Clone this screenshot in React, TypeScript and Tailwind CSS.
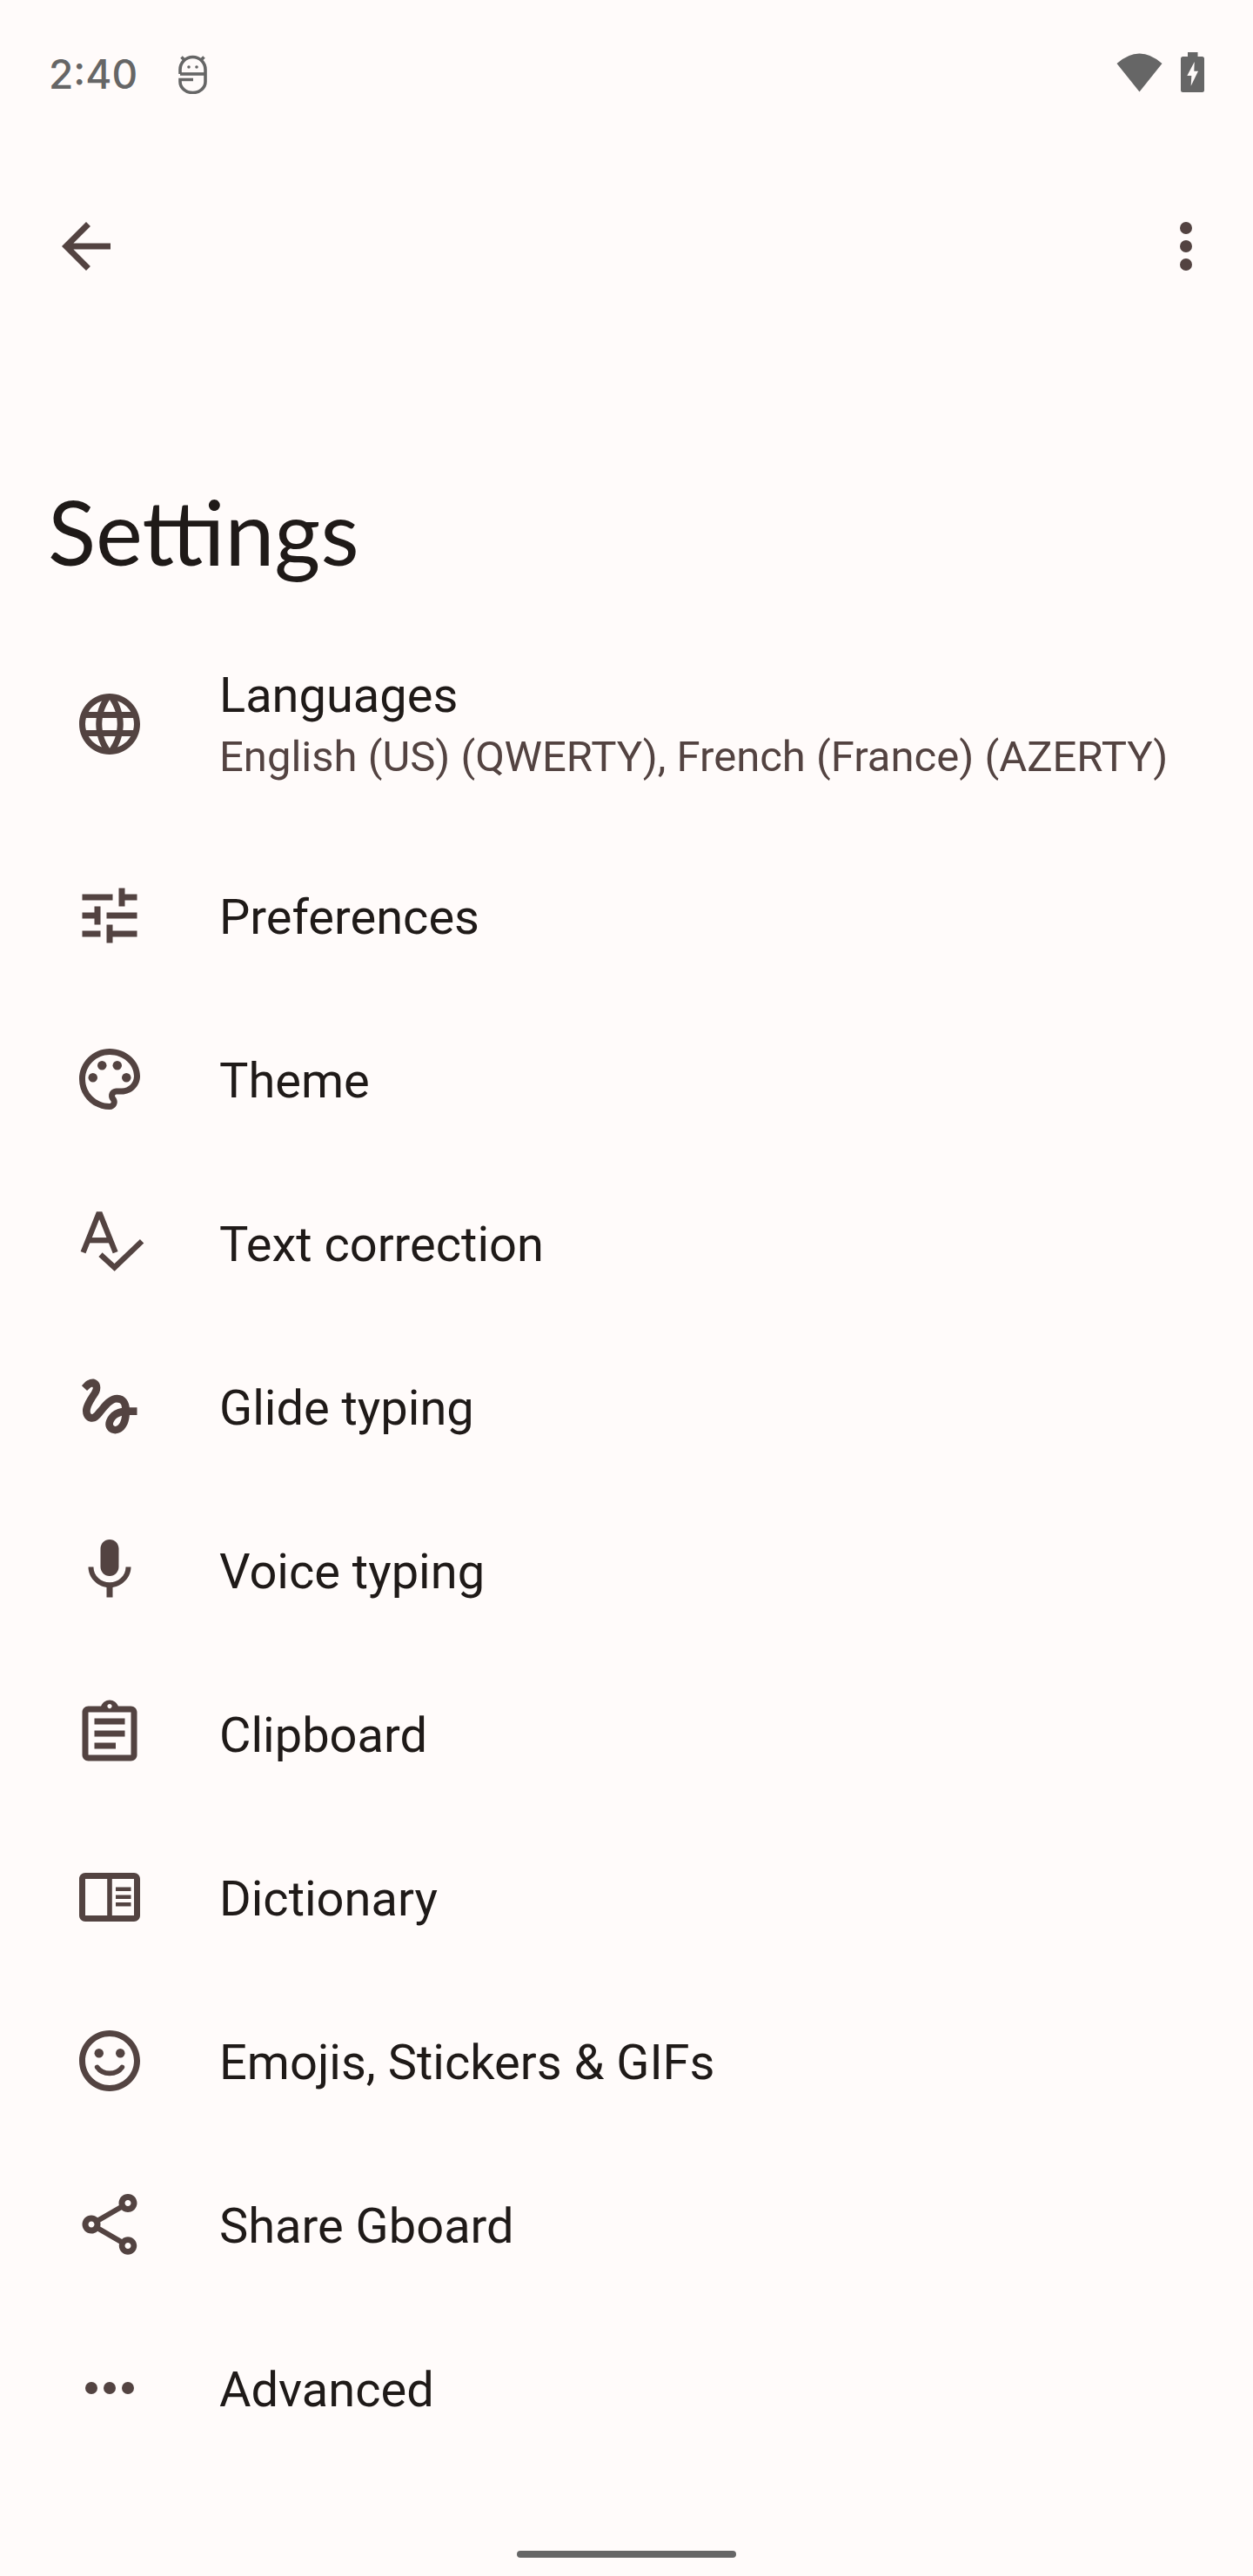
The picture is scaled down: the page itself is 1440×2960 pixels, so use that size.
import React from "react";

const ICON = "#534341";

function Ico({ children, className = "" }: { children: React.ReactNode; className?: string }) {
  return (
    <svg viewBox="0 0 24 24" width="84" height="84" fill={ICON} className={`shrink-0 ${className}`}>
      {children}
    </svg>
  );
}

const icons: Record<string, React.ReactNode> = {
  language: (
    <path d="M11.99 2C6.47 2 2 6.48 2 12s4.47 10 9.99 10C17.52 22 22 17.52 22 12S17.52 2 11.99 2zm6.93 6h-2.95c-.32-1.25-.78-2.45-1.38-3.56 1.84.63 3.37 1.91 4.33 3.56zM12 4.04c.83 1.2 1.48 2.53 1.91 3.96h-3.82c.43-1.43 1.08-2.76 1.91-3.96zM4.26 14C4.1 13.36 4 12.69 4 12s.1-1.36.26-2h3.38c-.08.66-.14 1.32-.14 2 0 .68.06 1.34.14 2H4.26zm.82 2h2.95c.32 1.25.78 2.45 1.38 3.56-1.84-.63-3.37-1.9-4.33-3.56zm2.95-8H5.08c.96-1.66 2.49-2.93 4.33-3.56C8.81 5.55 8.35 6.75 8.03 8zM12 19.96c-.83-1.2-1.48-2.53-1.91-3.96h3.82c-.43 1.43-1.08 2.76-1.91 3.96zM14.34 14H9.66c-.09-.66-.16-1.32-.16-2 0-.68.07-1.35.16-2h4.68c.09.65.16 1.32.16 2 0 .68-.07 1.34-.16 2zm.25 5.56c.6-1.11 1.06-2.31 1.38-3.56h2.95c-.96 1.65-2.49 2.93-4.33 3.56zM16.36 14c.08-.66.14-1.32.14-2 0-.68-.06-1.34-.14-2h3.38c.16.64.26 1.31.26 2s-.1 1.36-.26 2h-3.38z" />
  ),
  tune: (
    <path d="M3 17v2h6v-2H3zM3 5v2h10V5H3zm10 16v-2h8v-2h-8v-2h-2v6h2zM7 9v2H3v2h4v2h2V9H7zm14 4v-2H11v2h10zm-6-4h2V7h4V5h-4V3h-2v6z" />
  ),
  palette: (
    <>
      <path d="M12 22C6.49 22 2 17.51 2 12S6.49 2 12 2s10 4.04 10 9c0 3.31-2.69 6-6 6h-1.77c-.28 0-.5.22-.5.5 0 .12.05.23.13.33.41.47.64 1.06.64 1.67 0 1.38-1.12 2.5-2.5 2.5zm0-18c-4.41 0-8 3.59-8 8s3.59 8 8 8c.28 0 .5-.22.5-.5 0-.16-.08-.28-.14-.35-.41-.46-.63-1.05-.63-1.65 0-1.38 1.12-2.5 2.5-2.5H16c2.21 0 4-1.79 4-4 0-3.86-3.59-7-8-7z" />
      <circle cx="6.5" cy="11.5" r="1.5" />
      <circle cx="9.5" cy="7.5" r="1.5" />
      <circle cx="14.5" cy="7.5" r="1.5" />
      <circle cx="17.5" cy="11.5" r="1.5" />
    </>
  ),
  spell: (
    <g fill="none" stroke={ICON} strokeWidth="1.8">
      <path d="M3.3 15.2 8.3 2.700h.6l5 12.500" />
      <path d="M5 11.200h7.200" />
      <path d="M9 15.900l4.600 4.200 9-8.600" />
    </g>
  ),
  gesture: (
    <path d="M4.59 6.89c.7-.71 1.4-1.35 1.71-1.22.5.2 0 1.03-.3 1.52-.25.42-2.86 3.89-2.86 6.31 0 1.28.48 2.34 1.34 2.98.75.56 1.74.73 2.64.46 1.07-.31 1.95-1.4 3.06-2.77 1.21-1.49 2.83-3.44 4.08-3.44 1.63 0 1.65 1.01 1.76 1.79-3.78.64-5.38 3.67-5.38 5.37 0 1.7 1.44 3.09 3.21 3.09 1.63 0 4.29-1.33 4.69-6.1H21v-2.5h-2.47c-.15-1.65-1.09-4.2-4.03-4.2-2.25 0-4.18 1.91-4.94 2.84-.58.73-2.06 2.48-2.29 2.72-.25.3-.68.84-1.11.84-.45 0-.72-.83-.36-1.92.35-1.09 1.4-2.86 1.85-3.52.78-1.14 1.3-1.92 1.3-3.28C8.95 3.69 7.31 3 6.44 3 5.12 3 3.97 4 3.72 4.25c-.36.36-.66.66-.88.93l1.75 1.71zm9.29 11.66c-.31 0-.74-.26-.74-.72 0-.6.73-2.2 2.87-2.76-.3 2.69-1.43 3.48-2.13 3.48z" />
  ),
  mic: (
    <path d="M12 14c1.66 0 2.99-1.34 2.99-3L15 5c0-1.66-1.34-3-3-3S9 3.34 9 5v6c0 1.66 1.34 3 3 3zm5.3-3c0 3-2.54 5.1-5.3 5.1S6.7 14 6.7 11H5c0 3.41 2.72 6.23 6 6.72V21h2v-3.28c3.28-.48 6-3.3 6-6.72h-1.7z" />
  ),
  clipboard: (
    <>
      <path
        fillRule="evenodd"
        d="M19 3h-4.18C14.4 1.84 13.3 1 12 1s-2.4.84-2.82 2H5c-1.1 0-2 .9-2 2v14c0 1.1.9 2 2 2h14c1.1 0 2-.9 2-2V5c0-1.1-.9-2-2-2zm0 16H5V5h14v14zM12 2.25c.41 0 .75.34.75.75s-.34.75-.75.75-.75-.34-.75-.75.34-.75.75-.75z"
      />
      <path d="M7 7h10v2H7zM7 11h10v2H7zM7 15h7v2H7z" />
    </>
  ),
  dictionary: (
    <path
      fillRule="evenodd"
      d="M20 4H4c-1.1 0-2 .9-2 2v12c0 1.1.9 2 2 2h16c1.1 0 2-.9 2-2V6c0-1.1-.9-2-2-2zM4 18V6h7.2v12H4zm16 0h-7.2V6H20v12zM14 8.7h5V10h-5zm0 2.6h5v1.3h-5zm0 2.4h5V15h-5z"
    />
  ),
  mood: (
    <>
      <path d="M11.99 2C6.47 2 2 6.48 2 12s4.47 10 9.99 10C17.52 22 22 17.52 22 12S17.52 2 11.99 2zM12 20c-4.42 0-8-3.58-8-8s3.58-8 8-8 8 3.58 8 8-3.58 8-8 8z" />
      <circle cx="15.5" cy="9.5" r="1.5" />
      <circle cx="8.5" cy="9.5" r="1.5" />
      <path d="M7.9 14.1c.9 1.3 2.4 2 4.1 2s3.2-.7 4.1-2" fill="none" stroke={ICON} strokeWidth="1.6" strokeLinecap="round" />
    </>
  ),
  share: (
    <path d="M18 16.08c-.76 0-1.44.3-1.96.77L8.91 12.7c.05-.23.09-.46.09-.7s-.04-.47-.09-.7l7.05-4.11c.54.5 1.25.81 2.04.81 1.66 0 3-1.34 3-3s-1.34-3-3-3-3 1.34-3 3c0 .24.04.47.09.7L8.04 9.81C7.5 9.31 6.79 9 6 9c-1.66 0-3 1.34-3 3s1.34 3 3 3c.79 0 1.5-.31 2.04-.81l7.12 4.16c-.05.21-.08.43-.08.65 0 1.61 1.31 2.92 2.92 2.92s2.92-1.31 2.92-2.92-1.31-2.92-2.92-2.92zM18 4c.55 0 1 .45 1 1s-.45 1-1 1-1-.45-1-1 .45-1 1-1zM6 13c-.55 0-1-.45-1-1s.45-1 1-1 1 .45 1 1-.45 1-1 1zm12 7.02c-.55 0-1-.45-1-1s.45-1 1-1 1 .45 1 1-.45 1-1 1z" />
  ),
  more: (
    <>
      <circle cx="6" cy="12" r="2" />
      <circle cx="12" cy="12" r="2" />
      <circle cx="18" cy="12" r="2" />
    </>
  ),
};

const rows: { icon: string; label: string }[] = [
  { icon: "tune", label: "Preferences" },
  { icon: "palette", label: "Theme" },
  { icon: "spell", label: "Text correction" },
  { icon: "gesture", label: "Glide typing" },
  { icon: "mic", label: "Voice typing" },
  { icon: "clipboard", label: "Clipboard" },
  { icon: "dictionary", label: "Dictionary" },
  { icon: "mood", label: "Emojis, Stickers & GIFs" },
  { icon: "share", label: "Share Gboard" },
  { icon: "more", label: "Advanced" },
];

export default function App() {
  return (
    <div className="flex h-[2960px] w-[1440px] flex-col bg-[#fffbfa] font-['Roboto',sans-serif] antialiased">
      {/* status bar */}
      <div className="flex h-[168px] shrink-0 items-start justify-between pl-[56px] pr-[56px] pt-[60px]">
        <div className="flex items-center">
          <span className="w-[100px] text-[46px] font-medium leading-[50px] text-[#666666] font-['Inter',sans-serif]">2:40</span>
          <svg viewBox="0 0 33 45" width="33" height="45" className="ml-[49px]" fill="none" stroke="#666666" strokeWidth="3.6">
            <path d="M2 22V17A14.5 14.5 0 0 1 31 17V31A14.5 12.5 0 0 1 2 31V28.5H17" />
            <path d="M2 22H31" />
            <path d="M3.5 2.5L7 6M29.5 2.5L26 6" />
            <circle cx="12" cy="14" r="1.8" fill="#666666" stroke="none" />
            <circle cx="21" cy="14" r="1.8" fill="#666666" stroke="none" />
          </svg>
        </div>
        <div className="flex items-center gap-[21px]">
          <svg viewBox="0 0 53 45" width="53" height="45" fill="#666666">
            <path d="M0.5 12Q26.5 -11 52.5 12L26.5 44.5Z" />
          </svg>
          <svg viewBox="0 0 27 46" width="27" height="46" fill="#666666">
            <path d="M8 0h11.5v5H24.5a2.5 2.5 0 0 1 2.5 2.5V43.5a2.5 2.5 0 0 1-2.5 2.5H2.5A2.5 2.5 0 0 1 0 43.5V7.500A2.500 2.500 0 0 1 2.500 5H8z" />
            <path d="M15.700 11L7.300 27h5L11.700 38.700 20 21.700h-4.700z" fill="#fffbfa" />
          </svg>
        </div>
      </div>

      {/* app bar */}
      <div className="flex shrink-0 items-center justify-between pl-[57px] pr-[35px] pt-[73px]">
        <svg viewBox="0 0 24 24" width="84" height="84" fill={ICON}>
          <path d="M20 11H7.830l5.590-5.590L12 4l-8 8 8 8 1.410-1.410L7.830 13H20v-2z" />
        </svg>
        <svg viewBox="0 0 24 24" width="84" height="84" fill={ICON}>
          <circle cx="12" cy="6" r="2" />
          <circle cx="12" cy="12" r="2" />
          <circle cx="12" cy="18" r="2" />
        </svg>
      </div>

      {/* title */}
      <h1 className="mt-[226px] h-[159px] shrink-0 pl-[55px] text-[102px] font-normal leading-[120px] text-[#1f1a18] font-['Lato',sans-serif]">
        Settings
      </h1>

      {/* list */}
      <div className="flex h-[248px] shrink-0 items-center gap-[84px] pl-[84px]">
        <Ico className="mb-[4px]">{icons.language}</Ico>
        <div className="flex flex-col pt-[2px]">
          <span className="text-[56px] leading-[70px] text-[#1f1a18]">Languages</span>
          <span className="text-[49px] leading-[72px] text-[#534341]">English (US) (QWERTY), French (France) (AZERTY)</span>
        </div>
      </div>
      {rows.map((r) => (
        <div key={r.label} className="flex h-[188px] shrink-0 items-center gap-[84px] pl-[84px]">
          <Ico>{icons[r.icon]}</Ico>
          <span className="pt-[3px] text-[56px] leading-[70px] text-[#1f1a18]">{r.label}</span>
        </div>
      ))}

      {/* nav handle */}
      <div className="mt-auto flex shrink-0 justify-center pb-[21px]">
        <div className="h-[8px] w-[252px] rounded-full bg-[#666666]" />
      </div>
    </div>
  );
}
